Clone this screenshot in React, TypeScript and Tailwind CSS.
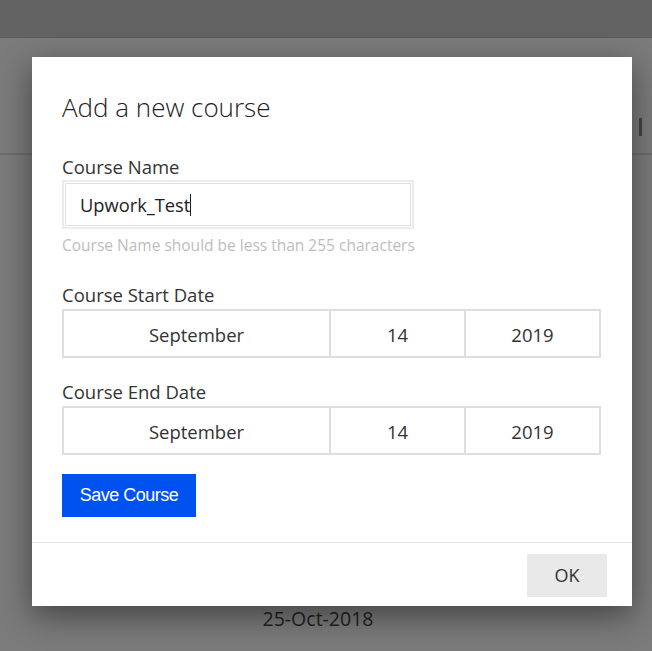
import React from 'react';

const font = { fontFamily: '"Open Sans", "Noto Sans", sans-serif' };

const DateRow = ({ month, day, year }: { month: string; day: string; year: string }) => (
    <div className="flex h-[49px] border-2 border-[#dedede] text-[18.5px] text-[#333] pt-[3px]">
        <div className="w-[267px] flex items-center justify-center border-r-2 border-[#dedede] -mt-[3px] pt-[3px]">{month}</div>
        <div className="w-[135px] flex items-center justify-center border-r-2 border-[#dedede] -mt-[3px] pt-[3px]">{day}</div>
        <div className="flex-1 flex items-center justify-center">{year}</div>
    </div>
);

export default function App() {
    return (
        <div className="relative w-[652px] h-[651px] overflow-hidden bg-[#7b7b7b]" style={font}>
            {/* page behind the modal */}
            <div className="h-[38px] bg-[#636363] border-b border-[#5d5d5d]" />
            <div className="h-[117px] border-b-2 border-[#6d6d6d] flex justify-end items-start pt-[80px]">
                <div className="w-[3px] h-[18px] bg-[#444] mr-[10px]" />
            </div>
            <div className="pt-[449px] text-center text-[19.5px] text-[#222] pr-[16px]">25-Oct-2018</div>

            {/* modal */}
            <div className="absolute inset-0 pt-[57px] pl-[32px]">
                <div className="w-[600px] h-[549px] bg-white shadow-[0_10px_30px_rgba(0,0,0,0.45)] flex flex-col">
                    <div className="px-[30px] pt-[30px] flex-1">
                        <h2 className="text-[26px] font-light text-[#222] leading-[40px]">Add a new course</h2>

                        <div className="mt-[28px] text-[18.5px] text-[#333] leading-[24px]">Course Name</div>
                        <div className="mt-[1px] w-[352px] h-[49px] border-2 border-[#ececec] p-[1px]">
                            <div className="h-full border border-[#e0e0e0] flex items-center pl-[14px] text-[18.3px] text-[#222]">
                                Upwork_Test<span className="inline-block w-[1px] h-[22px] bg-[#222]" />
                            </div>
                        </div>
                        <div className="mt-[6px] text-[15.5px] text-[#bdbdbd] leading-[20px]">Course Name should be less than 255 characters</div>

                        <div className="mt-[28px] text-[18.5px] text-[#333] leading-[24px]">Course Start Date</div>
                        <div className="mt-[2px] w-[539px]">
                            <DateRow month="September" day="14" year="2019" />
                        </div>

                        <div className="mt-[22px] text-[18.5px] text-[#333] leading-[24px]">Course End Date</div>
                        <div className="mt-[2px] w-[539px]">
                            <DateRow month="September" day="14" year="2019" />
                        </div>

                        <button
                            className="mt-[19px] w-[134px] h-[43px] bg-[#0052f0] text-white text-[18px] tracking-[-0.5px]"
                            style={{ fontFamily: '"Liberation Sans", Arial, sans-serif' }}
                        >
                            Save Course
                        </button>
                    </div>
                    <div className="h-[64px] border-t border-[#e6e6e6] flex justify-end items-start pt-[11px] pr-[25px]">
                        <button className="w-[80px] h-[43px] bg-[#e9e9e9] text-[18px] text-[#333]">OK</button>
                    </div>
                </div>
            </div>
        </div>
    );
}
